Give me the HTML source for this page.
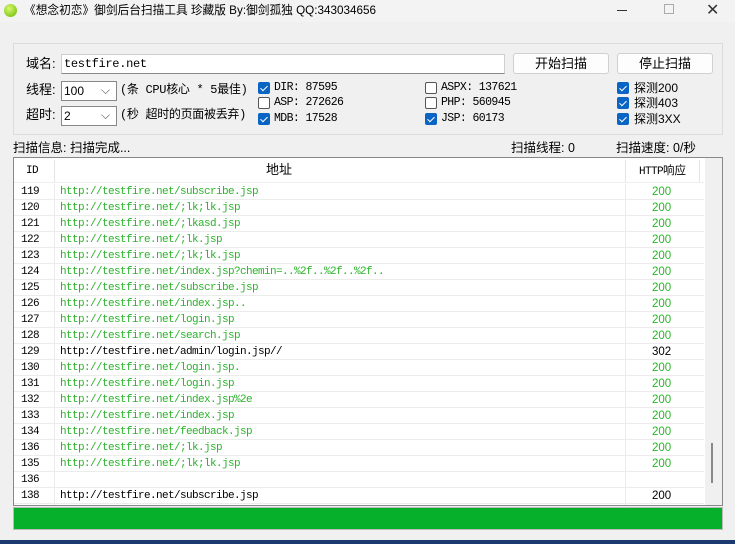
<!DOCTYPE html>
<html><head><meta charset="utf-8"><style>
*{margin:0;padding:0;box-sizing:border-box}
body{width:735px;height:544px;background:#f0f0f0;font-family:"Liberation Sans","Noto Sans CJK SC",sans-serif;font-size:12px;color:#000;position:relative;overflow:hidden;line-height:14px}
.a{position:absolute;white-space:nowrap;line-height:14px}
.title{left:0;top:0;width:735px;height:22px;background:#f3f3f3}
.grp{left:13px;top:43px;width:710px;height:92px;border:1px solid #dcdcdc}
.btn{border:1px solid #d0d0d0;background:#fdfdfd;border-radius:3px;text-align:center;line-height:19px;font-size:13px}
.inp{background:#fff;border:1px solid #cfcfcf}
.cb{width:12px;height:12px;border-radius:2px;border:1px solid #555;background:#fff}
.cb.on{background:#0a64c4;border-color:#0a64c4}
.cb.on:after{content:"";position:absolute;left:3px;top:1px;width:3px;height:6px;border:solid #fff;border-width:0 1px 1px 0;transform:rotate(45deg)}
.mono{font-family:"Liberation Mono","Noto Sans CJK SC",monospace;font-size:11px;letter-spacing:-0.6px}
.tbl{left:13px;top:157px;width:710px;height:349px;border:1px solid #888;background:#fff;overflow:hidden}
.row{position:absolute;left:0;width:690px;height:16px;border-bottom:1px solid #ececec;line-height:15px}
.g{color:#2ab42a}
</style></head><body>
<div class="a title"></div>
<div class="a" style="left:4px;top:4px;width:13px;height:13px;border-radius:50%;background:radial-gradient(circle at 40% 35%,#d8f870,#66b800)"></div>
<div class="a" style="left:24px;top:4px;font-size:11.7px">《想念初恋》御剑后台扫描工具 珍藏版 By:御剑孤独 QQ:343034656</div>
<div class="a" style="left:617px;top:10px;width:10px;height:1px;background:#333"></div>
<div class="a" style="left:664px;top:4px;width:10px;height:10px;border:1px solid #aaa"></div>
<div class="a" style="left:706px;top:2px;font-size:16px;line-height:18px;color:#333">✕</div>

<div class="a grp"></div>
<div class="a" style="left:26px;top:57px;font-size:13px">域名:</div>
<div class="a inp" style="left:61px;top:54px;width:444px;height:20px;border-bottom:1px solid #888"></div>
<div class="a mono" style="left:64px;top:57px;font-size:12px;letter-spacing:-0.3px">testfire.net</div>
<div class="a btn" style="left:513px;top:53px;width:96px;height:21px;line-height:19px">开始扫描</div>
<div class="a btn" style="left:617px;top:53px;width:96px;height:21px;line-height:19px">停止扫描</div>

<div class="a" style="left:26px;top:83px;font-size:13px">线程:</div>
<div class="a inp" style="left:61px;top:81px;width:56px;height:20px;border-color:#888"></div>
<div class="a" style="left:64px;top:84px">100</div>
<div class="a" style="left:101px;top:83px;color:#555">⌵</div>
<div class="a mono" style="left:120px;top:83px;font-size:12px;letter-spacing:-0.3px">(条 CPU核心 * 5最佳)</div>
<div class="a" style="left:26px;top:108px;font-size:13px">超时:</div>
<div class="a inp" style="left:61px;top:106px;width:56px;height:20px;border-color:#888"></div>
<div class="a" style="left:64px;top:109px">2</div>
<div class="a" style="left:101px;top:108px;color:#555">⌵</div>
<div class="a mono" style="left:120px;top:108px;font-size:12px;letter-spacing:-0.3px">(秒 超时的页面被丢弃)</div>

<div class="a cb on" style="left:258px;top:82px"></div><div class="a mono" style="left:274px;top:81px;font-size:11.5px">DIR: 87595</div>
<div class="a cb" style="left:258px;top:97px"></div><div class="a mono" style="left:274px;top:96px;font-size:11.5px">ASP: 272626</div>
<div class="a cb on" style="left:258px;top:113px"></div><div class="a mono" style="left:274px;top:112px;font-size:11.5px">MDB: 17528</div>
<div class="a cb" style="left:425px;top:82px"></div><div class="a mono" style="left:441px;top:81px;font-size:11.5px">ASPX: 137621</div>
<div class="a cb" style="left:425px;top:97px"></div><div class="a mono" style="left:441px;top:96px;font-size:11.5px">PHP: 560945</div>
<div class="a cb on" style="left:425px;top:113px"></div><div class="a mono" style="left:441px;top:112px;font-size:11.5px">JSP: 60173</div>
<div class="a cb on" style="left:617px;top:82px"></div><div class="a" style="left:634px;top:81px">探测200</div>
<div class="a cb on" style="left:617px;top:97px"></div><div class="a" style="left:634px;top:96px">探测403</div>
<div class="a cb on" style="left:617px;top:113px"></div><div class="a" style="left:634px;top:112px">探测3XX</div>

<div class="a" style="left:13px;top:141px;font-size:12.5px">扫描信息: 扫描完成...</div>
<div class="a" style="left:511px;top:141px;font-size:12.5px">扫描线程: 0</div>
<div class="a" style="left:616px;top:141px;font-size:12.5px">扫描速度: 0/秒</div>

<div class="a tbl">
<div class="a" style="left:691px;top:0;width:17px;height:347px;background:#f0f0f0"></div>
<div class="a" style="left:697px;top:285px;width:2px;height:40px;background:#888"></div>
<div class="a" style="left:0;top:0;width:690px;height:25px;border-bottom:1px solid #eee"></div>
<div class="a" style="left:40px;top:2px;width:1px;height:22px;background:#e5e5e5"></div>
<div class="a" style="left:611px;top:2px;width:1px;height:22px;background:#e5e5e5"></div>
<div class="a" style="left:685px;top:2px;width:1px;height:22px;background:#e5e5e5"></div>
<div class="a mono" style="left:12px;top:6px">ID</div>
<div class="a" style="left:252px;top:5px;font-size:13px">地址</div>
<div class="a" style="left:625px;top:6px;font-size:11.5px"><span class="mono">HTTP</span>响应</div>
<div id="rows"></div>
</div>
<div class="a" style="left:13px;top:507px;width:710px;height:23px;border:1px solid #bbb;background:#07b02a"></div>
<div class="a" style="left:0;top:540px;width:735px;height:4px;background:#1d3a70"></div>
<script>
var d=[["119","/subscribe.jsp",1],["120","/;lk;lk.jsp",1],["121","/;lkasd.jsp",1],["122","/;lk.jsp",1],["123","/;lk;lk.jsp",1],["124","/index.jsp?chemin=..%2f..%2f..%2f..",1],["125","/subscribe.jsp",1],["126","/index.jsp..",1],["127","/login.jsp",1],["128","/search.jsp",1],["129","/admin/login.jsp//",0,"302"],["130","/login.jsp.",1],["131","/login.jsp",1],["132","/index.jsp%2e",1],["133","/index.jsp",1],["134","/feedback.jsp",1],["136","/;lk.jsp",1],["135","/;lk;lk.jsp",1],["136","",2],["138","/subscribe.jsp",0],["","",2]];
var h="";d.forEach(function(r,i){var t=26+i*16;var c=r[2]==1?"g":"";h+='<div class="row" style="top:'+t+'px"><div class="a mono" style="left:7px;top:1px">'+r[0]+'</div><div class="a" style="left:40px;top:0;width:1px;height:16px;background:#ececec"></div><div class="a" style="left:611px;top:0;width:1px;height:16px;background:#ececec"></div>'+(r[2]==2?'':'<div class="a mono '+c+'" style="left:46px;top:1px">http://testfire.net'+r[1]+'</div><div class="a '+c+'" style="left:638px;top:1px;font-size:11.5px">'+(r[3]||"200")+'</div>')+'</div>';});
document.getElementById("rows").innerHTML=h;
</script>
</body></html>
